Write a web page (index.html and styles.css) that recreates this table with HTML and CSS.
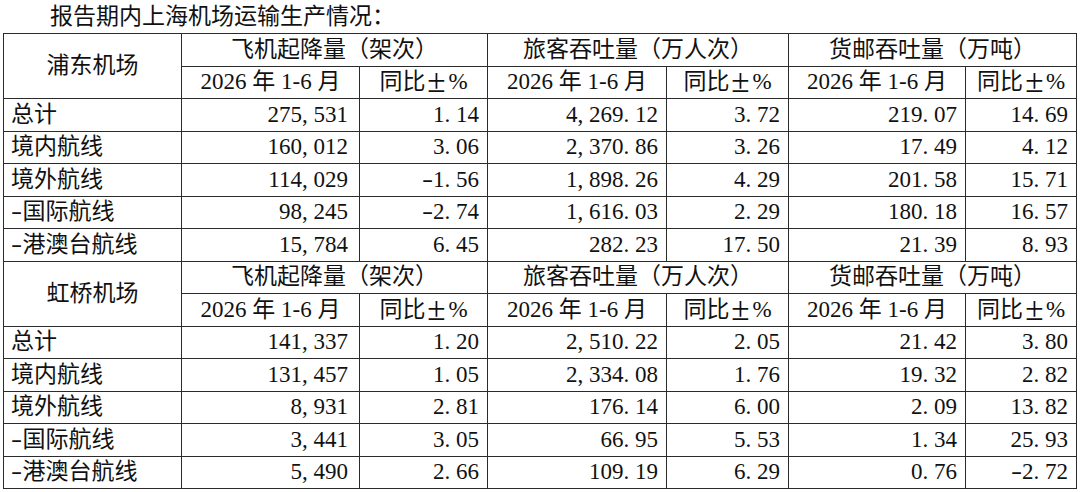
FILE: index.html
```html
<!DOCTYPE html>
<html lang="zh-CN">
<head>
<meta charset="utf-8">
<title>报告期内上海机场运输生产情况</title>
<link rel="stylesheet" href="styles.css">
</head>
<body>
<div class="title">报告期内上海机场运输生产情况：</div>
<table class="stats">
  <colgroup>
    <col class="c-label">
    <col class="c-flt">
    <col class="c-fltp">
    <col class="c-pax">
    <col class="c-paxp">
    <col class="c-cgo">
    <col class="c-cgop">
  </colgroup>
  <tbody>
    <tr>
      <th rowspan="2" class="airport">浦东机场</th>
      <th colspan="2" class="grp">飞机起降量（架次）</th>
      <th colspan="2" class="grp">旅客吞吐量（万人次）</th>
      <th colspan="2" class="grp">货邮吞吐量（万吨）</th>
    </tr>
    <tr>
      <th>2026 年 1-6 月</th><th>同比<span class="pm">±</span>%</th>
      <th>2026 年 1-6 月</th><th>同比<span class="pm">±</span>%</th>
      <th>2026 年 1-6 月</th><th>同比<span class="pm">±</span>%</th>
    </tr>
    <tr>
      <td class="label">总计</td>
      <td class="num n1">275<span class="p">,</span>531</td>
      <td class="num">1<span class="p">.</span>14</td>
      <td class="num">4<span class="p">,</span>269<span class="p">.</span>12</td>
      <td class="num">3<span class="p">.</span>72</td>
      <td class="num">219<span class="p">.</span>07</td>
      <td class="num">14<span class="p">.</span>69</td>
    </tr>
    <tr>
      <td class="label">境内航线</td>
      <td class="num n1">160<span class="p">,</span>012</td>
      <td class="num">3<span class="p">.</span>06</td>
      <td class="num">2<span class="p">,</span>370<span class="p">.</span>86</td>
      <td class="num">3<span class="p">.</span>26</td>
      <td class="num">17<span class="p">.</span>49</td>
      <td class="num">4<span class="p">.</span>12</td>
    </tr>
    <tr>
      <td class="label">境外航线</td>
      <td class="num n1">114<span class="p">,</span>029</td>
      <td class="num"><span class="m">-</span>1<span class="p">.</span>56</td>
      <td class="num">1<span class="p">,</span>898<span class="p">.</span>26</td>
      <td class="num">4<span class="p">.</span>29</td>
      <td class="num">201<span class="p">.</span>58</td>
      <td class="num">15<span class="p">.</span>71</td>
    </tr>
    <tr>
      <td class="label"><span class="m">-</span>国际航线</td>
      <td class="num n1">98<span class="p">,</span>245</td>
      <td class="num"><span class="m">-</span>2<span class="p">.</span>74</td>
      <td class="num">1<span class="p">,</span>616<span class="p">.</span>03</td>
      <td class="num">2<span class="p">.</span>29</td>
      <td class="num">180<span class="p">.</span>18</td>
      <td class="num">16<span class="p">.</span>57</td>
    </tr>
    <tr>
      <td class="label"><span class="m">-</span>港澳台航线</td>
      <td class="num n1">15<span class="p">,</span>784</td>
      <td class="num">6<span class="p">.</span>45</td>
      <td class="num">282<span class="p">.</span>23</td>
      <td class="num">17<span class="p">.</span>50</td>
      <td class="num">21<span class="p">.</span>39</td>
      <td class="num">8<span class="p">.</span>93</td>
    </tr>
  </tbody>
  <tbody>
    <tr>
      <th rowspan="2" class="airport">虹桥机场</th>
      <th colspan="2" class="grp">飞机起降量（架次）</th>
      <th colspan="2" class="grp">旅客吞吐量（万人次）</th>
      <th colspan="2" class="grp">货邮吞吐量（万吨）</th>
    </tr>
    <tr>
      <th>2026 年 1-6 月</th><th>同比<span class="pm">±</span>%</th>
      <th>2026 年 1-6 月</th><th>同比<span class="pm">±</span>%</th>
      <th>2026 年 1-6 月</th><th>同比<span class="pm">±</span>%</th>
    </tr>
    <tr>
      <td class="label">总计</td>
      <td class="num n1">141<span class="p">,</span>337</td>
      <td class="num">1<span class="p">.</span>20</td>
      <td class="num">2<span class="p">,</span>510<span class="p">.</span>22</td>
      <td class="num">2<span class="p">.</span>05</td>
      <td class="num">21<span class="p">.</span>42</td>
      <td class="num">3<span class="p">.</span>80</td>
    </tr>
    <tr>
      <td class="label">境内航线</td>
      <td class="num n1">131<span class="p">,</span>457</td>
      <td class="num">1<span class="p">.</span>05</td>
      <td class="num">2<span class="p">,</span>334<span class="p">.</span>08</td>
      <td class="num">1<span class="p">.</span>76</td>
      <td class="num">19<span class="p">.</span>32</td>
      <td class="num">2<span class="p">.</span>82</td>
    </tr>
    <tr>
      <td class="label">境外航线</td>
      <td class="num n1">8<span class="p">,</span>931</td>
      <td class="num">2<span class="p">.</span>81</td>
      <td class="num">176<span class="p">.</span>14</td>
      <td class="num">6<span class="p">.</span>00</td>
      <td class="num">2<span class="p">.</span>09</td>
      <td class="num">13<span class="p">.</span>82</td>
    </tr>
    <tr>
      <td class="label"><span class="m">-</span>国际航线</td>
      <td class="num n1">3<span class="p">,</span>441</td>
      <td class="num">3<span class="p">.</span>05</td>
      <td class="num">66<span class="p">.</span>95</td>
      <td class="num">5<span class="p">.</span>53</td>
      <td class="num">1<span class="p">.</span>34</td>
      <td class="num">25<span class="p">.</span>93</td>
    </tr>
    <tr>
      <td class="label"><span class="m">-</span>港澳台航线</td>
      <td class="num n1">5<span class="p">,</span>490</td>
      <td class="num">2<span class="p">.</span>66</td>
      <td class="num">109<span class="p">.</span>19</td>
      <td class="num">6<span class="p">.</span>29</td>
      <td class="num">0<span class="p">.</span>76</td>
      <td class="num"><span class="m">-</span>2<span class="p">.</span>72</td>
    </tr>
  </tbody>
</table>
</body>
</html>
```

FILE: styles.css
```css
html, body {
  margin: 0;
  padding: 0;
  background: #ffffff;
}

body {
  font-family: "Liberation Serif", "Noto Sans CJK SC", serif;
  font-size: 23px;
  color: #111111;
}

.title {
  height: 33px;
  line-height: 34px;
  padding-left: 4px;
  text-indent: 2em;
  white-space: nowrap;
}

.stats {
  margin-left: 3px;
  width: 1074px;
  table-layout: fixed;
  border-collapse: collapse;
}

.c-label { width: 178px; }
.c-flt   { width: 178px; }
.c-fltp  { width: 128px; }
.c-pax   { width: 179px; }
.c-paxp  { width: 122px; }
.c-cgo   { width: 177px; }
.c-cgop  { width: 111px; }

.stats tr {
  height: 32.5px;
}

.stats th,
.stats td {
  border: 1px solid #2b2b2b;
  padding: 0;
  line-height: 26px;
  vertical-align: middle;
  white-space: nowrap;
  font-weight: normal;
}

.stats th {
  text-align: center;
}

.stats td.label {
  text-align: left;
  padding-left: 7px;
}

.stats td.num {
  text-align: right;
  padding-right: 8px;
}

.stats td.n1 {
  padding-right: 11px;
}

.p {
  display: inline-block;
  width: 0.5em;
  text-align: left;
}

.pm {
  display: inline-block;
  width: 1em;
  text-align: center;
  transform: scale(1.45);
}

.m {
  display: inline-block;
  width: 0.5em;
  text-align: left;
  transform: scaleX(1.45);
  transform-origin: left center;
}
```
